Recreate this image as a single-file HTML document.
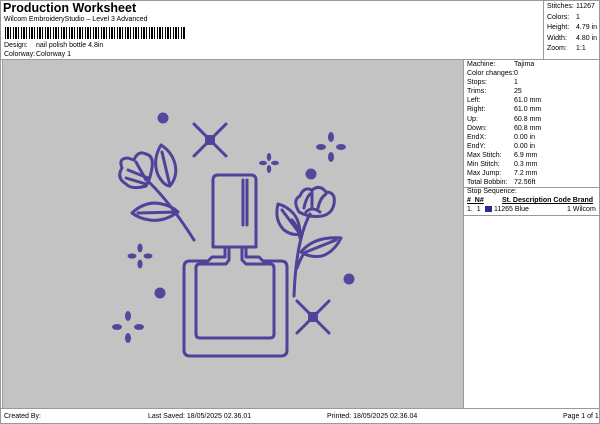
<!DOCTYPE html>
<html><head><meta charset="utf-8"><style>
*{margin:0;padding:0;box-sizing:border-box}
body{width:600px;height:424px;background:#fff;font-family:"Liberation Sans",sans-serif;color:#000;position:relative;overflow:hidden;font-size:7px}
.a{position:absolute;white-space:nowrap}
</style></head><body>
<div class="a" style="left:3px;top:1px;font-size:12.5px;font-weight:bold">Production Worksheet</div>
<div class="a" style="left:4px;top:16px;font-size:7px">Wilcom EmbroideryStudio – Level 3 Advanced</div>
<div class="a" style="left:5px;top:27px;width:181px;height:12px;background:repeating-linear-gradient(90deg,#000 0 1px,#fff 1px 2px,#000 2px 4px,#fff 4px 5px,#000 5px 6px,#fff 6px 8px)"></div>
<div class="a" style="left:4px;top:42px">Design:</div><div class="a" style="left:36px;top:42px">nail polish bottle 4.8in</div>
<div class="a" style="left:4px;top:51px">Colorway:</div><div class="a" style="left:36px;top:51px">Colorway 1</div>
<div class="a" style="left:0;top:0;width:600px;height:1px;background:#999"></div>
<div class="a" style="left:543px;top:0;width:1px;height:59px;background:#999"></div>
<div class="a" style="left:599px;top:0;width:1px;height:424px;background:#999"></div>
<div class="a" style="left:0;top:0;width:1px;height:424px;background:#999"></div>
<div class="a" style="left:0;top:59px;width:600px;height:1px;background:#999"></div>
<div class="a" style="left:2px;top:60px;width:461px;height:348px;background:#c3c3c3;border-left:1px solid #999"></div>
<div class="a" style="left:463px;top:60px;width:1px;height:348px;background:#999"></div>
<div class="a" style="left:0;top:408px;width:600px;height:1px;background:#999"></div>
<div class="a" style="left:0;top:423px;width:600px;height:1px;background:#999"></div>
<div class="a" style="left:547px;top:2px;line-height:10.5px">Stitches:<br>Colors:<br>Height:<br>Width:<br>Zoom:</div>
<div class="a" style="left:576px;top:2px;line-height:10.5px">11267<br>1<br>4.79 in<br>4.80 in<br>1:1</div>
<div class="a" style="left:467px;top:60px;line-height:9.1px">Machine:<br>Color changes:<br>Stops:<br>Trims:<br>Left:<br>Right:<br>Up:<br>Down:<br>EndX:<br>EndY:<br>Max Stitch:<br>Min Stitch:<br>Max Jump:<br>Total Bobbin:</div>
<div class="a" style="left:514px;top:60px;line-height:9.1px">Tajima<br>0<br>1<br>25<br>61.0 mm<br>61.0 mm<br>60.8 mm<br>60.8 mm<br>0.00 in<br>0.00 in<br>6.9 mm<br>0.3 mm<br>7.2 mm<br>72.56ft</div>
<div class="a" style="left:464px;top:187px;width:135px;height:1px;background:#999"></div>
<div class="a" style="left:467px;top:188px">Stop Sequence:</div>
<div class="a" style="left:467px;top:197px;font-weight:bold;text-decoration:underline">#&nbsp; N#</div>
<div class="a" style="left:502px;top:197px;font-weight:bold;text-decoration:underline">St. Description Code Brand</div>
<div class="a" style="left:467px;top:206px">1.&nbsp; 1</div>
<div class="a" style="left:485px;top:206px;width:7px;height:6px;background:#2a2a90"></div>
<div class="a" style="left:494px;top:206px">11265 Blue</div>
<div class="a" style="left:567px;top:206px">1 Wilcom</div>
<div class="a" style="left:464px;top:215px;width:135px;height:1px;background:#999"></div>
<div class="a" style="left:4px;top:413px">Created By:</div>
<div class="a" style="left:148px;top:413px">Last Saved: 18/05/2025 02.36.01</div>
<div class="a" style="left:327px;top:413px">Printed: 18/05/2025 02.36.04</div>
<div class="a" style="left:563px;top:413px">Page 1 of 1</div>
<svg class="a" style="left:0;top:0" width="600" height="424" viewBox="0 0 600 424">
<g fill="#54479e" stroke="none">
<circle cx="163" cy="118" r="5.5"/><circle cx="311" cy="174" r="5.5"/><circle cx="349" cy="279" r="5.5"/><circle cx="160" cy="293" r="5.5"/>
<rect x="205" y="135" width="10" height="10"/><rect x="308" y="312" width="10" height="10"/>
</g>
<g fill="#54479e">
<g transform="translate(269,163)"><ellipse cx="0" cy="-6" rx="2.2" ry="4"/><ellipse cx="0" cy="6" rx="2.2" ry="4"/><ellipse cx="-6" cy="0" rx="4" ry="2.2"/><ellipse cx="6" cy="0" rx="4" ry="2.2"/></g>
<g transform="translate(331,147)"><ellipse cx="0" cy="-10" rx="3" ry="5"/><ellipse cx="0" cy="10" rx="3" ry="5"/><ellipse cx="-10" cy="0" rx="5" ry="3"/><ellipse cx="10" cy="0" rx="5" ry="3"/></g>
<g transform="translate(140,256)"><ellipse cx="0" cy="-8" rx="2.6" ry="4.5"/><ellipse cx="0" cy="8" rx="2.6" ry="4.5"/><ellipse cx="-8" cy="0" rx="4.5" ry="2.6"/><ellipse cx="8" cy="0" rx="4.5" ry="2.6"/></g>
<g transform="translate(128,327)"><ellipse cx="0" cy="-11" rx="3" ry="5"/><ellipse cx="0" cy="11" rx="3" ry="5"/><ellipse cx="-11" cy="0" rx="5" ry="3"/><ellipse cx="11" cy="0" rx="5" ry="3"/></g>
</g>
<g fill="none" stroke="#4e4299" stroke-width="3" stroke-linecap="round" stroke-linejoin="round">
<path d="M194 124 L226 156 M226 124 L194 156"/>
<path d="M297 301 L329 333 M329 301 L297 333"/>
<path d="M213 247 V180 Q213 175 218 175 H251 Q256 175 256 180 V247 Z"/>
<path d="M243 180 V225 M247 180 V225"/>
<path d="M225 247 V257 H212 L208 261 H190 Q184 261 184 267 V350 Q184 356 190 356 H281 Q287 356 287 350 V267 Q287 261 281 261 H263 L259 257 H246 V247"/>
<path d="M229 247 V260 L226 264 H200 Q196 264 196 268 V334 Q196 338 200 338 H270 Q274 338 274 334 V268 Q274 264 270 264 H246 L242 260 V247"/>
<path d="M150 183 Q172 205 194 240"/>
<path d="M122 168 Q118 158 128 158 L134 160 Q138 150 146 154 Q154 156 152 168 Q150 180 146 186 Q132 190 126 184 Q116 178 122 168 Z"/>
<path d="M128 170 L148 178 M136 162 L146 180 M126 178 L146 184"/>
<path d="M161 145 Q152 160 158 175 Q164 186 170 186 Q178 176 175 164 Q172 152 161 145 Z M162 152 L170 186"/>
<path d="M132 213 Q146 200 162 204 Q172 206 178 212 Q164 222 150 220 Q140 219 132 213 Z M138 213 L178 212"/>
<path d="M310 214 Q296 240 294 296"/>
<path d="M299 212 Q292 200 300 196 Q304 186 312 190 Q320 184 326 192 Q336 192 334 204 Q332 214 322 216 Q310 218 299 212 Z"/>
<path d="M304 208 Q306 198 310 194 M312 208 V192 M318 208 Q320 198 326 194 M306 212 Q312 206 320 212"/>
<path d="M278 204 Q274 220 284 230 Q292 236 300 234 Q300 220 292 212 Q286 206 278 204 Z M282 210 L300 234"/>
<path d="M301 252 Q314 236 341 238 Q334 252 322 256 Q310 258 301 252 Z M306 252 L336 240"/>
<path d="M300 238 Q298 226 292 220 M297 268 Q302 254 306 252"/>
</g>
</svg>
</body></html>
